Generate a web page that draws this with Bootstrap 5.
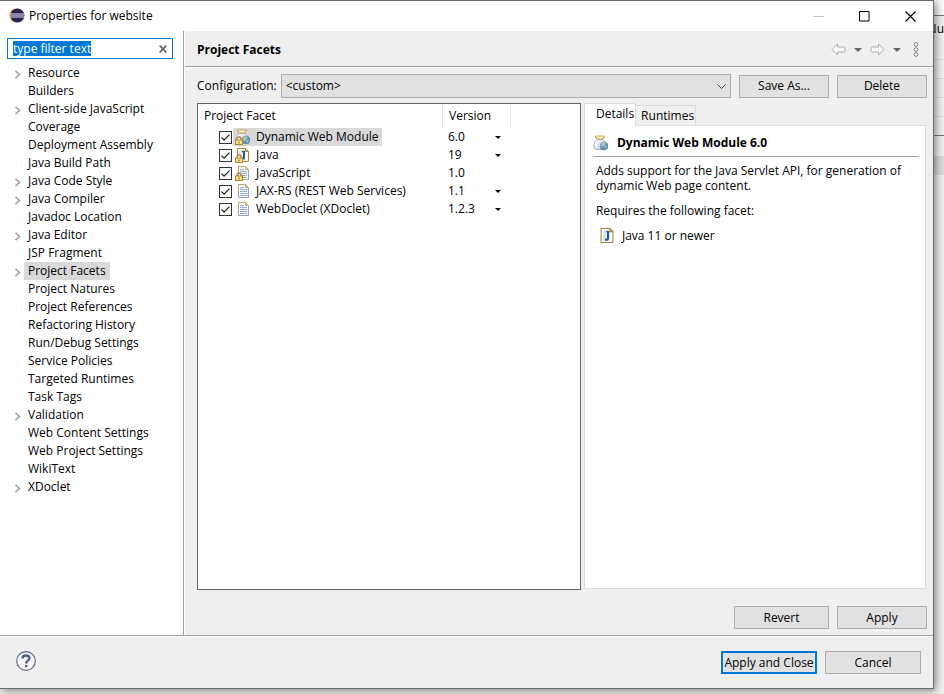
<!DOCTYPE html>
<html lang="en">
<head>
<meta charset="utf-8">
<meta name="viewport" content="width=device-width, initial-scale=1">
<title>Properties for website</title>
<link href="https://cdn.jsdelivr.net/npm/bootstrap@5.3.0/dist/css/bootstrap.min.css" rel="stylesheet">
<style>
  :root { --face: #efefef; --line: #a0a0a0; --soft: #dcdcdc; --accent: #0078d7; --pick: #d9d9d9; }
  body { font-family: "Open Sans", "Noto Sans", sans-serif; font-size: 12px; line-height: 18px; color: #000; background: #f1f1f1; }
  svg { display: block; flex: none; }
  .app { padding-bottom: 5px; }
  .dialog { background: var(--face); border: 1px solid #6a6a6a; border-left: 0; box-shadow: 2px 2px 8px rgba(0,0,0,.45); z-index: 1; min-width: 0; }
  .titlebar { height: 30px; padding-left: 9px; padding-right: 17px; }
  .titlebar h1, .page-head h2, .detail-head h3 { font-size: 12px; line-height: 18px; margin: 0; }
  .titlebar h1 { font-weight: 400; }
  .plain-btn { border: 0; background: none; padding: 0; color: inherit; font: inherit; }
  .win-btns { gap: 35px; }
  .side { width: 184px; padding: 7px 10px 0 7px; border-right: 1px solid var(--line); }
  .filter { height: 21px; border: 1px solid var(--accent); padding-left: 5px; padding-right: 5px; }
  .filter input { border: 0; outline: 0; padding: 0; width: 100%; min-width: 0; height: 15px; font: inherit; line-height: 15px; background: none; }
  .filter input::selection { background: var(--accent); color: #fff; }
  .tree { margin-top: 5px; }
  .tree li { height: 18px; display: flex; align-items: center; }
  .twisty { width: 17px; height: 18px; flex: none; padding: 2px 0 0 7px; display: flex; align-items: center; }
  .tree a { color: #000; text-decoration: none; padding: 0 4px; white-space: nowrap; }
  .tree a.current, .facet-name.current { background: var(--pick); }
  .page-area { min-width: 0; border-left: 1px solid #fff; }
  .page-head { height: 36px; padding: 2px 14px 0 12px; border-bottom: 1px solid var(--line); box-shadow: 0 1px #fff; }
  .page-body { padding: 7px 6px 6px 12px; min-height: 0; }
  .sys-btn { height: 23px; width: 90px; border: 1px solid #adadad; border-radius: 0; background: #e1e1e1; font-size: 12px; line-height: 18px; padding: 0; color: #000; white-space: nowrap; }
  .sys-btn.wide { width: 95px; }
  .sys-btn.default { border: 2px solid var(--accent); }
  .combo { height: 24px; border: 1px solid #adadad; border-radius: 0; padding: 0 24px 0 4px; font-size: 12px; line-height: 18px; color: #000; background-color: #e1e1e1; background-position: right 4px center; background-size: 9px 9px;
    background-image: url("data:image/svg+xml,%3Csvg xmlns='http://www.w3.org/2000/svg' viewBox='0 0 9 9'%3E%3Cpath d='M.5 2.5l4 4 4-4' fill='none' stroke='%23444'/%3E%3C/svg%3E"); }
  .panes { margin-top: 5px; margin-bottom: 16px; gap: 3px; }
  .facets { flex: 383 1 0; background: #fff; border: 1px solid #646464; min-width: 0; }
  .facets table { table-layout: fixed; width: 313px; border-collapse: separate; border-spacing: 0; }
  .facets th { font-weight: 400; height: 24px; padding: 0 6px; border-right: 1px solid #e5e5e5; }
  .facets td { height: 18px; padding: 0; }
  .facets td + td { padding-left: 5px; padding-right: 10px; }
  .col-facet { width: 245px; }
  .facets .form-check-input { width: 13px; height: 13px; margin: 1px 0 0; border: 1px solid #333; border-radius: 0; background-color: #fff; background-size: 11px 11px; flex: none; }
  .facets .form-check-input:checked { background-image: url("data:image/svg+xml,%3Csvg xmlns='http://www.w3.org/2000/svg' viewBox='0 0 11 11'%3E%3Cpath d='M1.5 5.5l2.6 2.7 5.4-5.6' fill='none' stroke='%23222' stroke-width='1.2'/%3E%3C/svg%3E"); }
  .facet-row { padding-left: 21px; gap: 1px; height: 18px; }
  .facet-name { padding: 0 3px 0 2px; gap: 5px; height: 18px; white-space: nowrap; }
  .details { flex: 343 1 0; min-width: 0; margin-right: 1px; margin-bottom: 1px; }
  .tabs { border: 0; height: 23px; align-items: flex-end; flex-wrap: nowrap; }
  .tabs .nav-link { border: 1px solid var(--soft); border-bottom: 0; border-radius: 0; color: #000; background: #f0f0f0; padding: 0 1px 0 5px; height: 20px; line-height: 20px; margin: 0 0 1px -1px; }
  .tabs .nav-link.active { background: #fff; height: 23px; line-height: 20px; margin: 0; padding: 0 1px 2px 11px; z-index: 1; color: #000; border-color: var(--soft); }
  .tab-page { background: #fff; border: 1px solid var(--soft); padding: 8px 6px 8px 8px; margin-top: -1px; }
  .detail-head { border-bottom: 1px solid var(--line); padding-bottom: 4px; gap: 8px; }
  .detail-text { padding: 6px 0 0 3px; line-height: 15px; }
  .detail-text p { margin-bottom: 10px; }
  .foot { border-top: 1px solid var(--line); box-shadow: inset 0 1px #fff; padding: 15px 12px 14px 16px; }
  .foot .sys-btn { width: 96px; }
  .behind { width: 10px; overflow: hidden; background: #f1f1f1; }
  .behind div { height: 19px; border-bottom: 1px solid #ddd; flex: none; }
  .behind .b-top { height: 16px; border-color: #777; background: #fafafa; }
  .behind .b-head { height: 44px; padding-top: 4px; direction: rtl; white-space: nowrap; }
  .behind .b-last { border-color: #777; }
  .behind .b-gap { height: 20px; border: 0; }
  .behind .b-band { border: 0; background: #dcdcdc; }
</style>
<script src="https://cdn.jsdelivr.net/npm/bootstrap@5.3.0/dist/js/bootstrap.bundle.min.js"></script>
</head>
<body>
<svg width="0" height="0" class="position-absolute" aria-hidden="true">
  <defs>
    <linearGradient id="gJar" x1="0" y1="0" x2="1" y2="1"><stop offset="0" stop-color="#fff"/><stop offset="1" stop-color="#b5c8df"/></linearGradient>
    <radialGradient id="gGlobe" cx=".35" cy=".3" r=".8"><stop offset="0" stop-color="#c4dcf0"/><stop offset=".5" stop-color="#6297c9"/><stop offset="1" stop-color="#2d5c9a"/></radialGradient>
    <symbol id="jar" viewBox="0 0 16 16">
      <path d="M4 4.500Q1 6.500 1 9.500v2.500q0 2.500 2.500 2.500h7Q13 14.500 13 12V9.500Q13 6.500 10 4.500z" fill="url(#gJar)" stroke="#9fb2c8"/>
      <path d="M3 8.500v4" stroke="#fff" stroke-width="1.500"/>
      <path d="M2.500 1h9v1.500h-1v1.500h-7V2.500h-1z" fill="#fff6cf" stroke="#cfa54a"/>
      <circle cx="11" cy="11" r="4" fill="url(#gGlobe)" stroke="#7d9cc0" stroke-width=".6"/>
      <path d="M9 8.500q2-1.500 3.200-.5l-1 2-1.700.6zM11.500 11.500l2.500-.8-.6 2.300-1.600 1z" fill="#b4cd7c"/>
    </symbol>
    <symbol id="javafile" viewBox="0 0 16 16">
      <path d="M2.500 1.500h8l3 3v10h-11z" fill="#fff" stroke="#a88434"/>
      <path d="M10.500 1.500v3h3z" fill="#f3dc9a" stroke="#a88434"/>
      <rect x="4" y="3" width="6" height="10" fill="#dbe9f7"/>
      <path d="M9 4v6q0 2-2 2H6" fill="none" stroke="#235a96" stroke-width="2"/>
      <path d="M7 4.500h3" stroke="#235a96"/>
    </symbol>
    <symbol id="doc" viewBox="0 0 16 16">
      <path d="M3.500 1.500h7l3 3v10h-10z" fill="#f8fbff" stroke="#93a5c0"/>
      <path d="M3.500 8V1.500H10" fill="none" stroke="#c4a968"/>
      <path d="M10.500 1.500v3h3z" fill="#eedb9d" stroke="#c4a968"/>
      <path d="M5 4.500h4M5 6.500h7M5 8.500h7M5 10.500h7M5 12.500h7" stroke="#8fabd6"/>
    </symbol>
    <symbol id="lock" viewBox="0 0 8 9">
      <path d="M2 4.500V2.800Q2 1 4 1t2 1.800v1.700" fill="none" stroke="#b58324" stroke-width="1.300"/>
      <rect x=".5" y="4" width="7" height="4.500" fill="#ffe394" stroke="#b58324"/>
      <path d="M4 5.500v2" stroke="#7a5510"/>
    </symbol>
    <symbol id="down" viewBox="0 0 6 3"><path d="M0 0h6L3 3z" fill="currentColor"/></symbol>
    <symbol id="twist" viewBox="0 0 7 9"><path d="M1.500 .8l4 3.700-4 3.700" fill="none" stroke="#a6a6a6" stroke-width="1.700"/></symbol>
    <symbol id="arrow" viewBox="0 0 15 13"><path d="M6.500 1v3h6q1.500 0 1.500 1v3q0 1-1.500 1h-6v3L1 6.500z" fill="#fafafa" stroke="#aaa" stroke-linejoin="round"/></symbol>
  </defs>
</svg>

<div class="app d-flex min-vh-100">
  <main class="dialog d-flex flex-column flex-grow-1" role="dialog" aria-labelledby="dlg-title">
    <header class="titlebar d-flex align-items-center justify-content-between bg-white">
      <div class="d-flex align-items-center gap-1">
        <svg width="16" height="16" viewBox="0 0 16 16" aria-hidden="true">
          <circle cx="7.300" cy="7.500" r="7" fill="#f59b35"/><circle cx="8.400" cy="7.500" r="7" fill="#2c2255"/>
          <path d="M1 6h14.500M1 9h14.500" stroke="#e8e6f0" stroke-width="1.200"/><path d="M1 7.500h14.800" stroke="#8d87ad"/>
        </svg>
        <h1 id="dlg-title">Properties for website</h1>
      </div>
      <div class="win-btns d-flex align-items-center">
        <button class="plain-btn" type="button" aria-label="Minimize" disabled><svg width="11" height="11" viewBox="0 0 11 11"><path d="M0 5.500h11" stroke="#c4c4c4"/></svg></button>
        <button class="plain-btn" type="button" aria-label="Maximize"><svg width="11" height="11" viewBox="0 0 11 11"><path d="M.5.5h9.500v9.500H.5z" fill="none" stroke="#000"/></svg></button>
        <button class="plain-btn" type="button" aria-label="Close"><svg width="11" height="11" viewBox="0 0 11 11"><path d="M.5.5l10 10m0-10l-10 10" stroke="#000" stroke-width="1.100"/></svg></button>
      </div>
    </header>

    <div class="d-flex flex-grow-1">
      <nav class="side bg-white flex-shrink-0" aria-label="Property pages">
        <div class="filter d-flex align-items-center">
          <input id="filter" type="text" value="type filter text" aria-label="Filter text" autofocus>
          <button class="plain-btn" type="button" aria-label="Clear"><svg width="8" height="8" viewBox="0 0 8 8"><path d="M.7.7l6.600 6.600m0-6.600L.7 7.300" stroke="#666" stroke-width="1.700"/></svg></button>
        </div>
        <ul class="tree list-unstyled mb-0">
          <li><button class="plain-btn twisty" type="button" aria-label="Expand Resource"><svg width="7" height="9"><use href="#twist"/></svg></button><a href="#">Resource</a></li>
          <li><span class="twisty"></span><a href="#">Builders</a></li>
          <li><button class="plain-btn twisty" type="button" aria-label="Expand Client-side JavaScript"><svg width="7" height="9"><use href="#twist"/></svg></button><a href="#">Client-side JavaScript</a></li>
          <li><span class="twisty"></span><a href="#">Coverage</a></li>
          <li><span class="twisty"></span><a href="#">Deployment Assembly</a></li>
          <li><span class="twisty"></span><a href="#">Java Build Path</a></li>
          <li><button class="plain-btn twisty" type="button" aria-label="Expand Java Code Style"><svg width="7" height="9"><use href="#twist"/></svg></button><a href="#">Java Code Style</a></li>
          <li><button class="plain-btn twisty" type="button" aria-label="Expand Java Compiler"><svg width="7" height="9"><use href="#twist"/></svg></button><a href="#">Java Compiler</a></li>
          <li><span class="twisty"></span><a href="#">Javadoc Location</a></li>
          <li><button class="plain-btn twisty" type="button" aria-label="Expand Java Editor"><svg width="7" height="9"><use href="#twist"/></svg></button><a href="#">Java Editor</a></li>
          <li><span class="twisty"></span><a href="#">JSP Fragment</a></li>
          <li><button class="plain-btn twisty" type="button" aria-label="Expand Project Facets"><svg width="7" height="9"><use href="#twist"/></svg></button><a href="#" class="current" aria-current="page">Project Facets</a></li>
          <li><span class="twisty"></span><a href="#">Project Natures</a></li>
          <li><span class="twisty"></span><a href="#">Project References</a></li>
          <li><span class="twisty"></span><a href="#">Refactoring History</a></li>
          <li><span class="twisty"></span><a href="#">Run/Debug Settings</a></li>
          <li><span class="twisty"></span><a href="#">Service Policies</a></li>
          <li><span class="twisty"></span><a href="#">Targeted Runtimes</a></li>
          <li><span class="twisty"></span><a href="#">Task Tags</a></li>
          <li><button class="plain-btn twisty" type="button" aria-label="Expand Validation"><svg width="7" height="9"><use href="#twist"/></svg></button><a href="#">Validation</a></li>
          <li><span class="twisty"></span><a href="#">Web Content Settings</a></li>
          <li><span class="twisty"></span><a href="#">Web Project Settings</a></li>
          <li><span class="twisty"></span><a href="#">WikiText</a></li>
          <li><button class="plain-btn twisty" type="button" aria-label="Expand XDoclet"><svg width="7" height="9"><use href="#twist"/></svg></button><a href="#">XDoclet</a></li>
        </ul>
      </nav>

      <section class="page-area d-flex flex-column flex-grow-1">
        <div class="page-head d-flex align-items-center justify-content-between">
          <h2 class="fw-bold">Project Facets</h2>
          <div class="d-flex align-items-center gap-2">
            <button class="plain-btn" type="button" aria-label="Back"><svg width="15" height="13"><use href="#arrow"/></svg></button>
            <button class="plain-btn" type="button" aria-label="Back history"><svg width="8" height="4" color="#666"><use href="#down"/></svg></button>
            <button class="plain-btn" type="button" aria-label="Forward"><svg width="15" height="13" viewBox="0 0 15 13"><g transform="matrix(-1 0 0 1 15 0)"><use href="#arrow" width="15" height="13"/></g></svg></button>
            <button class="plain-btn" type="button" aria-label="Forward history"><svg width="8" height="4" color="#666"><use href="#down"/></svg></button>
            <button class="plain-btn ms-1" type="button" aria-label="Menu"><svg width="6" height="15" viewBox="0 0 6 15"><g fill="#fff" stroke="#777"><circle cx="3" cy="2.500" r="1.800"/><circle cx="3" cy="7.500" r="1.800"/><circle cx="3" cy="12.500" r="1.800"/></g></svg></button>
          </div>
        </div>

        <div class="page-body d-flex flex-column flex-grow-1">
          <div class="d-flex align-items-center">
            <label for="config" class="me-1">Configuration:</label>
            <select id="config" class="combo form-select flex-grow-1 w-auto"><option>&lt;custom&gt;</option></select>
            <button class="btn sys-btn ms-2" type="button">Save As...</button>
            <button class="btn sys-btn ms-2" type="button">Delete</button>
          </div>

          <div class="panes d-flex flex-grow-1">
            <div class="facets">
              <table>
                <thead><tr><th class="col-facet" scope="col">Project Facet</th><th scope="col">Version</th></tr></thead>
                <tbody>
                  <tr>
                    <td><div class="facet-row d-flex align-items-center"><input class="form-check-input" type="checkbox" id="f1" checked><label for="f1" class="facet-name current d-flex align-items-center"><svg width="16" height="18" viewBox="0 0 16 18"><use href="#jar" x="0" y="1" width="16" height="16"/><use href="#lock" x="0" y="8" width="8" height="9"/></svg>Dynamic Web Module</label></div></td>
                    <td><div class="d-flex align-items-center justify-content-between">6.0<button class="plain-btn" type="button" aria-label="Version of Dynamic Web Module"><svg width="6" height="3"><use href="#down"/></svg></button></div></td>
                  </tr>
                  <tr>
                    <td><div class="facet-row d-flex align-items-center"><input class="form-check-input" type="checkbox" id="f2" checked><label for="f2" class="facet-name d-flex align-items-center"><svg width="16" height="18" viewBox="0 0 16 18"><use href="#javafile" x="0" y="1" width="16" height="16"/><use href="#lock" x="0" y="8" width="8" height="9"/></svg>Java</label></div></td>
                    <td><div class="d-flex align-items-center justify-content-between">19<button class="plain-btn" type="button" aria-label="Version of Java"><svg width="6" height="3"><use href="#down"/></svg></button></div></td>
                  </tr>
                  <tr>
                    <td><div class="facet-row d-flex align-items-center"><input class="form-check-input" type="checkbox" id="f3" checked><label for="f3" class="facet-name d-flex align-items-center"><svg width="16" height="18" viewBox="0 0 16 18"><use href="#doc" x="0" y="1" width="16" height="16"/><use href="#lock" x="0" y="8" width="8" height="9"/></svg>JavaScript</label></div></td>
                    <td>1.0</td>
                  </tr>
                  <tr>
                    <td><div class="facet-row d-flex align-items-center"><input class="form-check-input" type="checkbox" id="f4" checked><label for="f4" class="facet-name d-flex align-items-center"><svg width="16" height="16"><use href="#doc"/></svg>JAX-RS (REST Web Services)</label></div></td>
                    <td><div class="d-flex align-items-center justify-content-between">1.1<button class="plain-btn" type="button" aria-label="Version of JAX-RS"><svg width="6" height="3"><use href="#down"/></svg></button></div></td>
                  </tr>
                  <tr>
                    <td><div class="facet-row d-flex align-items-center"><input class="form-check-input" type="checkbox" id="f5" checked><label for="f5" class="facet-name d-flex align-items-center"><svg width="16" height="16"><use href="#doc"/></svg>WebDoclet (XDoclet)</label></div></td>
                    <td><div class="d-flex align-items-center justify-content-between">1.2.3<button class="plain-btn" type="button" aria-label="Version of WebDoclet"><svg width="6" height="3"><use href="#down"/></svg></button></div></td>
                  </tr>
                </tbody>
              </table>
            </div>

            <div class="details d-flex flex-column">
              <div class="tabs nav nav-tabs" role="tablist">
                <button class="nav-link active position-relative" type="button" role="tab" aria-selected="true">Details</button>
                <button class="nav-link" type="button" role="tab" aria-selected="false">Runtimes</button>
              </div>
              <div class="tab-page flex-grow-1" role="tabpanel">
                <div class="detail-head d-flex align-items-center">
                  <svg width="16" height="16"><use href="#jar"/></svg>
                  <h3 class="fw-bold">Dynamic Web Module 6.0</h3>
                </div>
                <div class="detail-text">
                  <p>Adds support for the Java Servlet API, for generation of dynamic Web page content.</p>
                  <p>Requires the following facet:</p>
                  <div class="d-flex align-items-center gap-2 ps-1"><svg width="14" height="15" viewBox="2 1 12 14"><use href="#javafile" width="16" height="16"/></svg>Java 11 or newer</div>
                </div>
              </div>
            </div>
          </div>

          <div class="d-flex justify-content-end gap-2">
            <button class="btn sys-btn wide" type="button">Revert</button>
            <button class="btn sys-btn" type="button">Apply</button>
          </div>
        </div>
      </section>
    </div>

    <footer class="foot d-flex align-items-center">
      <button class="plain-btn me-auto align-self-start" type="button" aria-label="Help">
        <svg width="20" height="20" viewBox="0 0 20 20"><circle cx="10" cy="10" r="9.300" fill="#f6f6f8" stroke="#5b6b8c" stroke-width="1.200"/><path d="M6.500 7.500Q6.500 4.500 10 4.500t3.500 2.800Q13.500 9 11.500 10q-1.300.8-1.300 2.500" fill="none" stroke="#4b5f8d" stroke-width="2.300"/><rect x="9" y="14" width="2.400" height="2.300" fill="#4b5f8d"/></svg>
      </button>
      <button class="btn sys-btn default me-2" type="button">Apply and Close</button>
      <button class="btn sys-btn" type="button">Cancel</button>
    </footer>
  </main>

  <aside class="behind d-flex flex-column flex-shrink-0" aria-hidden="true">
    <div class="b-top"></div><div class="b-head">Nu</div><div></div><div></div><div></div><div class="b-last"></div><div class="b-gap"></div><div class="b-band"></div>
  </aside>
</div>
<script>
  const field = document.getElementById('filter');
  field.focus();
  field.select();
</script>
</body>
</html>
